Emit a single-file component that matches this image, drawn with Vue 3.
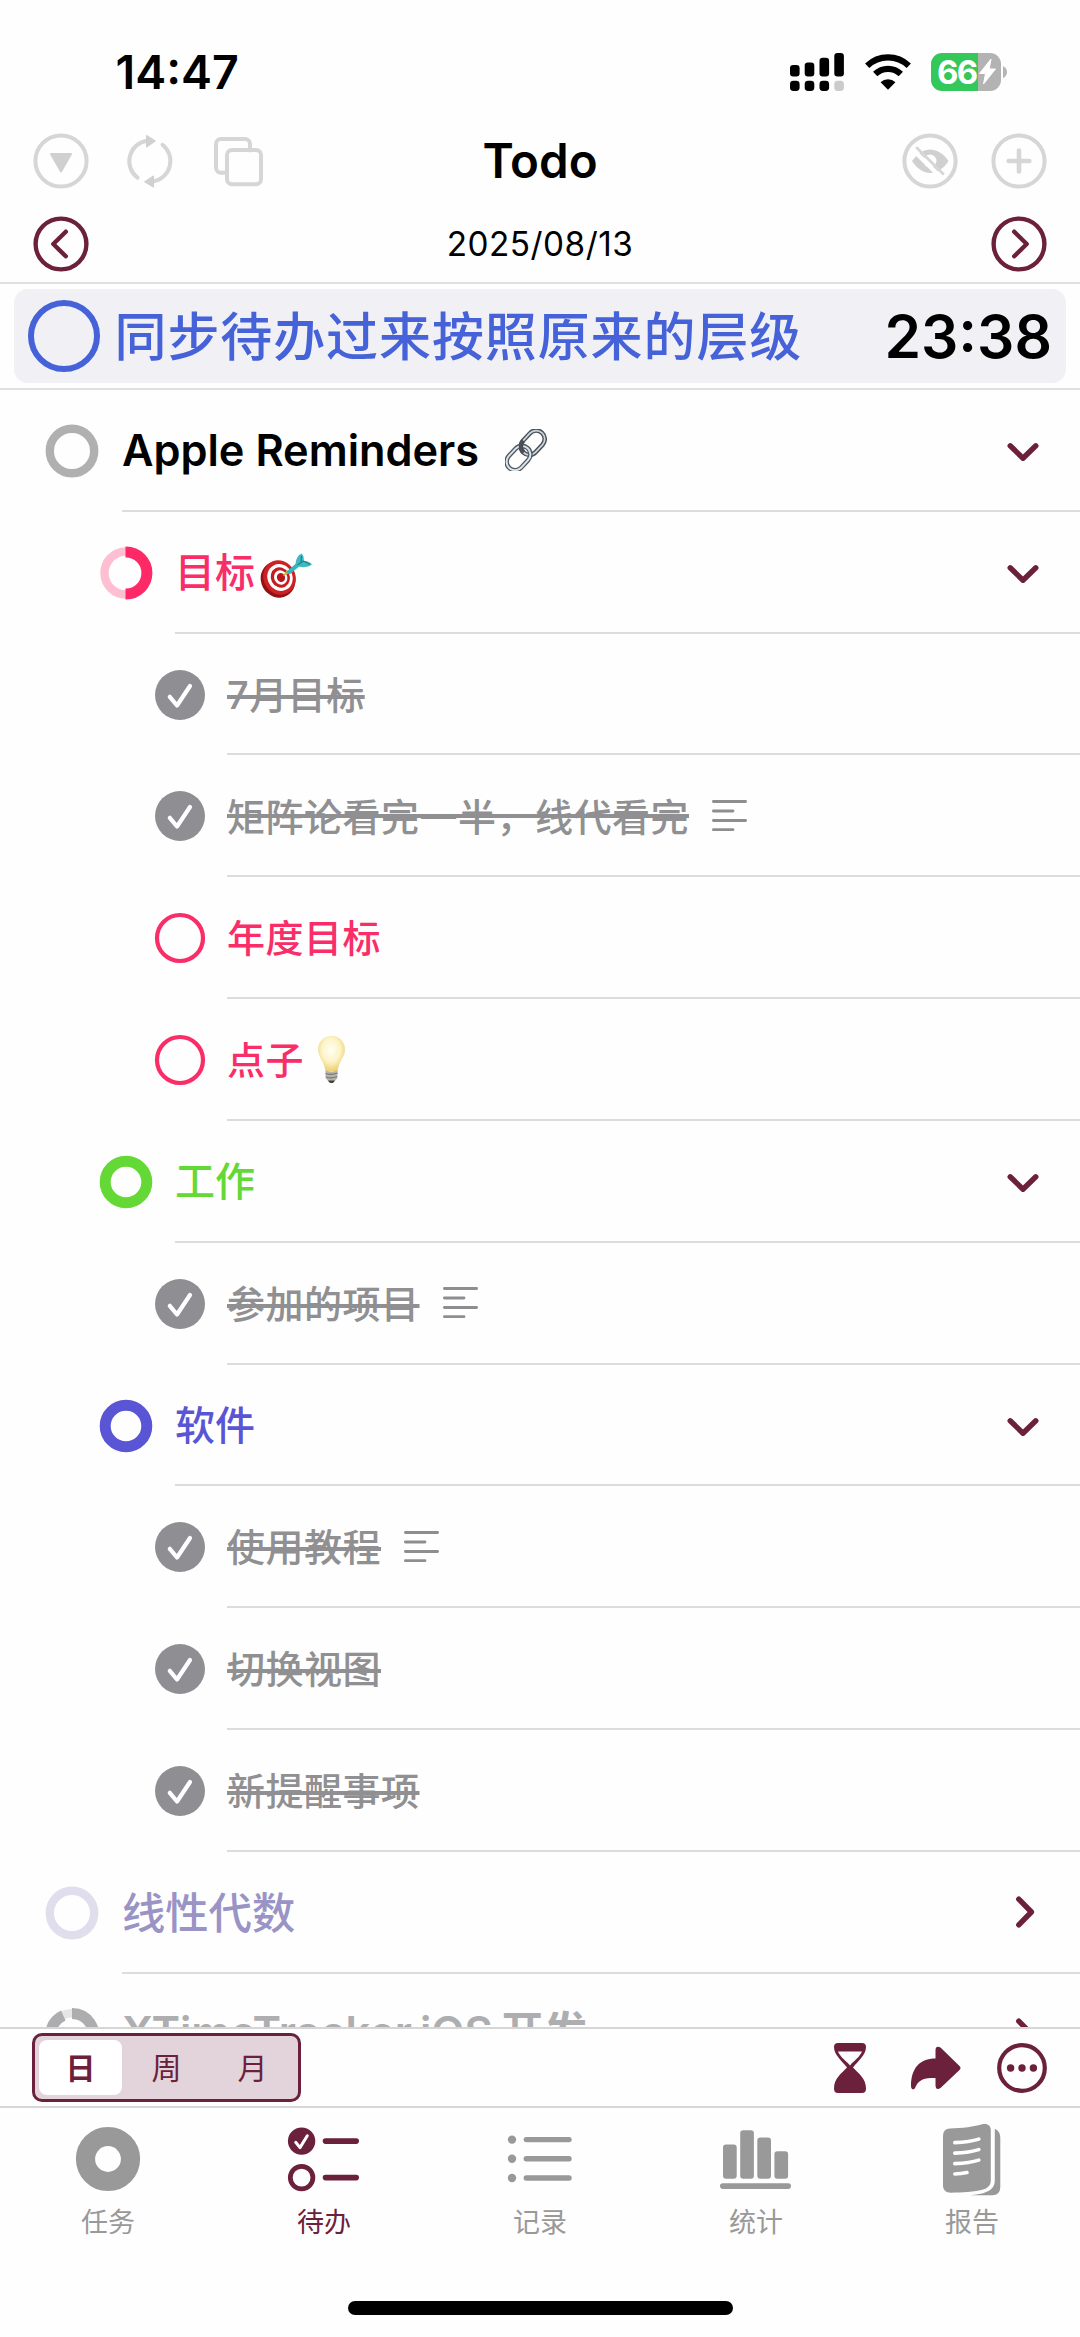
<script setup>
const rows = [
  { level: 0, mark: 'ring', color: '#b0b0b0', text: 'Apple Reminders', ink: '#000', emoji: 'link', arrow: 'down', latin: true },
  { level: 1, mark: 'half', color: '#fe2a68', text: '目标', ink: '#f92d68', emoji: 'target', arrow: 'down' },
  { level: 2, mark: 'done', text: '7月目标' },
  { level: 2, mark: 'done', text: '矩阵论看完一半，线代看完', note: true, hanOnly: true },
  { level: 2, mark: 'open', text: '年度目标', ink: '#f92d68' },
  { level: 2, mark: 'open', text: '点子', ink: '#f92d68', emoji: 'bulb' },
  { level: 1, mark: 'thick', color: '#64d935', text: '工作', ink: '#64d935', arrow: 'down' },
  { level: 2, mark: 'done', text: '参加的项目', note: true },
  { level: 1, mark: 'thick', color: '#5955d4', text: '软件', ink: '#5955d4', arrow: 'down' },
  { level: 2, mark: 'done', text: '使用教程', note: true },
  { level: 2, mark: 'done', text: '切换视图' },
  { level: 2, mark: 'done', text: '新提醒事项' },
  { level: 0, mark: 'ring', color: '#e0deec', text: '线性代数', ink: '#9994c5', arrow: 'right' },
  { level: 0, mark: 'most', color: '#adadb0', text: 'XTimeTracker iOS 开发', ink: '#aeaeb1', arrow: 'right', latin: true },
]
</script>

<template>
  <div class="screen" lang="zh-CN">
    <header class="status">
      <span class="clock">14:47</span>
      <div class="indicators">
        <svg width="54" height="38" viewBox="790 52.3 54 38">
          <rect x="790" y="64.3" width="9.6" height="11.4" rx="3.2" />
          <rect x="804.7" y="61.7" width="9.6" height="14" rx="3.2" />
          <rect x="819.5" y="57" width="9.6" height="18.7" rx="3.2" />
          <rect x="834.3" y="52.3" width="9.6" height="23.4" rx="3.2" />
          <rect x="790" y="80" width="9.6" height="10.3" rx="3.4" />
          <rect x="804.7" y="80" width="9.6" height="10.3" rx="3.4" />
          <rect x="819.5" y="80" width="9.6" height="10.3" rx="3.4" />
          <rect x="834.3" y="80" width="9.6" height="10.3" rx="3.4" fill="#cbcbcb" />
        </svg>
        <svg class="wifi" width="48" height="38" viewBox="0 0 48 38">
          <path d="M3.2 12.7A30 30 0 0 1 44.8 12.7M11.2 21A18.4 18.4 0 0 1 36.800 21" fill="none" stroke="#000" stroke-width="6.2" />
          <path d="M24 36.700 16.600 29.200A10.500 10.500 0 0 1 31.400 29.200Z" />
        </svg>
        <div class="battery">
          <span class="pct">66</span>
          <svg width="19" height="27" viewBox="0 0 19 27"><path d="M13 1 1.500 15.500h6L5.500 26 17.500 11h-6.300z" fill="#fff" stroke="#fff" stroke-linejoin="round" /></svg>
        </div>
        <svg width="4" height="12" viewBox="0 0 4 12"><path d="M0 0Q4 2 4 6T0 12Z" fill="#b5b5b5" /></svg>
      </div>
    </header>

    <nav class="nav">
      <div class="group">
        <svg width="56" height="56" viewBox="-28 -28 56 56" class="pale">
          <circle r="25.600" /><path class="solid" d="M-10-7h20L0 10.500z" stroke-width="2" />
        </svg>
        <svg width="56" height="56" viewBox="-28 -28 56 56" class="pale refresh">
          <path d="M-12.500 16.700A20.700 20.700 0 0 1-3-20.300M12.500-16.200A20.700 20.700 0 0 1 3 20.500" />
          <path class="solid" d="M-3.200-25.500 5.500-20 -3.200-14zM3.200 26-5.500 20.800 3.200 15z" stroke-width="1" />
        </svg>
        <svg width="56" height="56" viewBox="-28 -28 56 56" class="pale copy">
          <path d="M-11.700 11.700H-17a5 5 0 0 1-5-5V-17a5 5 0 0 1 5-5H7a5 5 0 0 1 5 5V-10.500" />
          <rect x="-11" y="-11" width="34" height="34.300" rx="5" />
        </svg>
      </div>
      <h1>Todo</h1>
      <div class="group">
        <svg width="56" height="56" viewBox="-28 -28 56 56" class="pale">
          <circle r="25.600" />
          <path class="fill" d="M-18 0C-12-8-6-11.500 0-11.500S13-8 18.500 0C13 8.500 6 12 0 12S-13 8-18 0Z" />
          <circle r="6.500" fill="#fff" stroke="none" />
          <path d="M-16.500-10.500 9.500 15" stroke="#fff" stroke-width="4.500" />
          <path d="M-13-13 13 12.700" stroke-width="2.800" />
        </svg>
        <svg width="56" height="56" viewBox="-28 -28 56 56" class="pale plus">
          <circle r="25.600" /><path d="M-10.300 0H10.300M0-10.500V10.500" stroke-width="4.600" />
        </svg>
      </div>
    </nav>

    <div class="dates">
      <svg width="56" height="56" viewBox="-28 -28 56 56" class="wine"><circle r="25.400" /><path d="M4.800-12.300-7.700 0 4.800 12.300" /></svg>
      <span class="date">2025/08/13</span>
      <svg width="56" height="56" viewBox="-28 -28 56 56" class="wine"><circle r="25.400" /><path d="M-4.800-12.300 7.700 0-4.800 12.300" /></svg>
    </div>

    <section class="current">
      <div class="card">
        <svg width="72" height="72" viewBox="-36 -36 72 72"><circle r="33" fill="none" stroke="#4562d8" stroke-width="6" /></svg>
        <span class="task">同步待办过来按照原来的层级</span>
        <span class="timer">23:38</span>
      </div>
    </section>

    <main class="list">
      <div v-for="(r, i) in rows" :key="i" class="row" :class="['level' + r.level, { done: r.mark === 'done', latin: r.latin, han: r.hanOnly }]">
        <svg class="mark" width="54" height="54" viewBox="-27 -27 54 54" fill="none">
          <circle v-if="r.mark === 'ring'" r="22.200" :stroke="r.color" stroke-width="8.400" />
          <circle v-else-if="r.mark === 'thick'" r="20.800" :stroke="r.color" stroke-width="11" />
          <template v-else-if="r.mark === 'half'">
            <path d="M0-21.500A21.500 21.500 0 0 0 0 21.500" stroke="#febfd2" stroke-width="8.400" />
            <path d="M-.5-20.900H0A20.900 20.900 0 0 1 0 20.900H-.5" :stroke="r.color" stroke-width="11" />
          </template>
          <template v-else-if="r.mark === 'most'">
            <circle r="21.800" stroke="#e6e6e6" stroke-width="8.400" />
            <path d="M0-21.500A21.500 21.500 0 1 1-8.700-19.600" :stroke="r.color" stroke-width="11" />
          </template>
          <circle v-else-if="r.mark === 'open'" r="23" stroke="#f92d68" stroke-width="4.200" />
          <template v-else>
            <circle r="25" fill="#8e8e93" />
            <path d="M-10.200 1.800-3 10.500 10-9" stroke="#fff" stroke-width="4.200" stroke-linecap="round" stroke-linejoin="round" />
          </template>
        </svg>
        <div class="body">
          <span class="label" :style="{ color: r.ink }">{{ r.text }}</span>
          <svg v-if="r.note" class="note" width="35" height="33" viewBox="0 0 35 33">
            <path d="M1.400 2.500H33.600M1.400 12H21M1.400 21.500H33.600M1.400 30.700H21" stroke="#8e8e90" stroke-width="2.800" stroke-linecap="round" />
          </svg>
          <svg v-if="r.emoji === 'link'" class="link" width="42" height="42" viewBox="0 0 42 42" fill="none">
            <g transform="rotate(-47 21 21)">
              <rect x="17.500" y="12.500" width="27" height="17" rx="8.500" stroke="#4b4f55" stroke-width="4.600" />
              <rect x="17.500" y="12.500" width="27" height="17" rx="8.500" stroke="#c9d5df" stroke-width="1.800" />
              <rect x="-3.500" y="12.500" width="27" height="17" rx="8.500" stroke="#54585e" stroke-width="4.600" />
              <rect x="-3.500" y="12.500" width="27" height="17" rx="8.500" stroke="#d6e4ef" stroke-width="2" />
              <path d="M17.500 21a8.500 8.500 0 0 1 8.500-8.500" stroke="#4b4f55" stroke-width="4.400" />
            </g>
          </svg>
          <svg v-if="r.emoji === 'target'" class="target" width="53" height="47" viewBox="0 0 53 47">
            <ellipse cx="18" cy="27.500" rx="17" ry="18.500" transform="rotate(-28 18 27.500)" fill="#8f1216" />
            <ellipse cx="19.500" cy="25.500" rx="16" ry="17.500" transform="rotate(-28 19.500 25.500)" fill="#cf2024" />
            <ellipse cx="20" cy="25.500" rx="12.400" ry="13.700" transform="rotate(-28 20 25.500)" fill="#fff" />
            <ellipse cx="20.300" cy="25.500" rx="9.400" ry="10.400" transform="rotate(-28 20.300 25.500)" fill="#c51c20" />
            <ellipse cx="20.700" cy="25.500" rx="6.600" ry="7.300" transform="rotate(-28 20.700 25.500)" fill="#fff" />
            <ellipse cx="21" cy="25.500" rx="4" ry="4.500" transform="rotate(-28 21 25.500)" fill="#b5171b" />
            <path d="M22.500 24 27 18 30 21Z" fill="#d9b42c" />
            <path d="M26 20 36 11.500 39 14.500 29.500 22.500Z" fill="#35b5bd" />
            <path d="M35.500 12Q36 4 41.500 1.500 44.500 4 43.500 9 49 8.500 52 12.500 47 16.500 38.500 14.500Z" fill="#3fb9c2" />
            <path d="M37.500 13 43.500 9 50 12.500M41 10.500 41.500 4" fill="none" stroke="#20848f" stroke-width="1.300" />
          </svg>
          <svg v-if="r.emoji === 'bulb'" class="bulb" width="29" height="49" viewBox="0 0 29 49">
            <defs><radialGradient id="glow" cx=".48" cy=".4" r=".6"><stop offset="0" stop-color="#fffef4" /><stop offset=".55" stop-color="#fdf4c8" /><stop offset="1" stop-color="#ecd074" /></radialGradient></defs>
            <path d="M14.500 1C22.500 1 28 7 28 14.500 28 22 22 26 20.500 36H8.500C7 26 1 22 1 14.500 1 7 6.500 1 14.500 1Z" fill="url(#glow)" />
            <path d="M8.500 35.500Q14.500 37.500 20.500 35.500V43L17 47Q14.500 48.500 12 47L8.500 43Z" fill="#b5b3aa" />
            <path d="M8.500 38.500Q14.500 40.500 20.500 38M9 42Q14.500 44 20 41.500" fill="none" stroke="#797870" stroke-width="1.200" />
            <path d="M11 45.500H18L16 48H13Z" fill="#44443f" />
          </svg>
          <svg v-if="r.arrow" class="arrow" :class="r.arrow" width="36" height="36" viewBox="-18 -18 36 36">
            <path :d="r.arrow === 'down' ? 'M-12.800-6.200 0 6.200 12.800-6.200' : 'M-6.200-12.800 6.400 0-6.200 12.800'" />
          </svg>
        </div>
      </div>
    </main>

    <section class="tools">
      <div class="segments">
        <span class="seg on">日</span><span class="seg">周</span><span class="seg">月</span>
      </div>
      <div class="actions">
        <svg width="32" height="50" viewBox="0 0 32 50" fill="#6b213c">
          <path fill-rule="evenodd" d="M4 0H28Q32 0 32 4C32 12 24 18 19 24.500 24 30 32 35 32 45.500Q32 50 28 50H4Q0 50 0 45.500C0 35 8 30 13 24.500 8 18 0 12 0 4Q0 0 4 0ZM4 8.500C6.500 14.500 12.500 18 16 22.500 19.500 18 25.500 14.500 28 8.500Z" />
        </svg>
        <svg width="50" height="44" viewBox="0 0 50 44" fill="#6b213c">
          <path d="M24.500 12.500V4.500Q24.500-1 29.500 1.500L48.500 20Q50.500 22 48.500 24L29.500 42Q25 45 24.500 39.500V32H20C11 32 6.500 36 4.500 41 3.500 44.500 0 44 0 40 0 22 9 12.500 24.500 12.500Z" />
        </svg>
        <svg width="50" height="50" viewBox="-25 -25 50 50">
          <circle r="22.800" fill="none" stroke="#6b213c" stroke-width="4.200" />
          <g fill="#6b213c"><circle cx="-11.400" r="3.700" /><circle r="3.700" /><circle cx="11.400" r="3.700" /></g>
        </svg>
      </div>
    </section>

    <footer class="tabs">
      <div class="tab">
        <svg width="80" height="76" viewBox="68 2120.700 80 76"><circle cx="108" cy="2158.700" r="22.500" fill="none" stroke="#999" stroke-width="19.200" /></svg>
        <span>任务</span>
      </div>
      <div class="tab active">
        <svg width="80" height="76" viewBox="284 2120.700 80 76" fill="none" stroke="#6b213c" stroke-width="5.600" stroke-linecap="round">
          <circle cx="301.600" cy="2140.800" r="13.700" fill="#6b213c" stroke="none" />
          <path d="M295.700 2142 300 2147.300 307.300 2135.500" stroke="#fff" stroke-width="3" stroke-linejoin="round" />
          <circle cx="301.600" cy="2177.300" r="11.300" stroke-width="4.800" />
          <path d="M325.500 2140.800H356.200M325.500 2177.300H356.200" />
        </svg>
        <span>待办</span>
      </div>
      <div class="tab">
        <svg width="80" height="76" viewBox="500 2120.700 80 76" fill="#999">
          <circle cx="512" cy="2139.300" r="4.200" /><circle cx="512" cy="2158.500" r="4.200" /><circle cx="512" cy="2177.700" r="4.200" />
          <path d="M526.300 2139.300H569M526.300 2158.500H569M526.300 2177.700H569" stroke="#999" stroke-width="5.400" stroke-linecap="round" />
        </svg>
        <span>记录</span>
      </div>
      <div class="tab">
        <svg width="80" height="76" viewBox="716 2120.700 80 76" fill="#999">
          <rect x="723" y="2144.200" width="13.700" height="34.200" rx="3" />
          <rect x="740.200" y="2130" width="13.700" height="48.400" rx="3" />
          <rect x="757.300" y="2137.300" width="13.700" height="41.100" rx="3" />
          <rect x="774.400" y="2151" width="13.700" height="27.400" rx="3" />
          <rect x="720" y="2183" width="71" height="5.600" rx="2.800" />
        </svg>
        <span>统计</span>
      </div>
      <div class="tab">
        <svg width="80" height="76" viewBox="932 2120.700 80 76" fill="#999">
          <path d="M950 2128.300C962 2128 974 2126.500 983 2123.800 988 2123 990.800 2125.500 990.800 2130V2180C990.800 2185 988 2187.500 984 2189 974 2191.700 962 2192.200 951 2192.400 946 2192.400 943 2190 943 2185V2136Q943 2128.500 950 2128.300Z" />
          <path d="M994.800 2128.500Q1000.300 2131 1000.300 2137V2187Q1000 2194.700 992.500 2195H970C982 2193.800 994.800 2192 994.800 2180Z" />
          <path d="M954.800 2142.300C963 2142 972 2141 978.800 2138.800M954.800 2152.800C963 2152.500 972 2151.500 978.800 2149.300M954.800 2163.300C963 2163 972 2162 978.800 2159.800M954.800 2173.700C959 2173.700 963 2173.200 967 2172.300" fill="none" stroke="#fff" stroke-width="3.600" stroke-linecap="round" />
        </svg>
        <span>报告</span>
      </div>
    </footer>
    <div class="home"></div>
  </div>
</template>

<style>
body {
  margin: 0;
  background: #fefefe;
}
</style>

<style scoped>
.screen {
  width: 1080px;
  height: 2337px;
  overflow: hidden;
  display: flex;
  flex-direction: column;
  box-sizing: border-box;
  background: #fefefe;
  color: #000;
  font-family: Inter, "Noto Sans CJK SC", sans-serif;
}
svg {
  display: block;
  flex: none;
}
.status {
  height: 110px;
  flex: none;
  box-sizing: border-box;
  padding: 52px 73px 0 115.5px;
  display: flex;
  justify-content: space-between;
  align-items: flex-start;
}
.clock {
  font-size: 46.5px;
  line-height: 40px;
  font-weight: 600;
}
.indicators {
  display: flex;
  align-items: center;
  height: 39px;
}
.wifi {
  margin: 0 19px 0 20px;
}
.battery {
  width: 70px;
  height: 38px;
  box-sizing: border-box;
  border-radius: 11px;
  background: linear-gradient(90deg, #34c759 0 47px, #b3b3b3 47px);
  display: flex;
  align-items: center;
  padding-left: 6px;
  margin-right: 2px;
}
.pct {
  width: 41px;
  color: #fff;
  font-weight: 700;
  font-size: 33px;
  letter-spacing: -1.700px;
}
.nav {
  height: 101px;
  flex: none;
  padding: 0 33px;
  display: flex;
  align-items: center;
  justify-content: space-between;
}
.group {
  width: 235px;
  display: flex;
}
.group:last-child {
  justify-content: flex-end;
}
.refresh {
  margin-left: 32.5px;
}
.copy {
  margin-left: 32px;
}
.plus {
  margin-left: 33px;
}
.pale {
  fill: none;
  stroke: #d6d6d6;
  stroke-width: 4;
  stroke-linecap: round;
  stroke-linejoin: round;
}
.pale .solid {
  fill: #d0d0d0;
  stroke: #d0d0d0;
}
.pale .fill {
  fill: #d0d0d0;
  stroke: none;
}
h1 {
  margin: 0;
  font-size: 47.5px;
  line-height: 60px;
  font-weight: 600;
}
.dates {
  height: 71px;
  flex: none;
  box-sizing: border-box;
  padding: 0 33px 6px;
  display: flex;
  align-items: center;
  justify-content: space-between;
}
.date {
  font-size: 33.3px;
  letter-spacing: 0.5px;
}
.wine {
  fill: none;
  stroke: #6b213c;
  stroke-width: 4.4;
  stroke-linecap: round;
  stroke-linejoin: round;
}
.current {
  height: 108px;
  flex: none;
  box-sizing: border-box;
  padding: 5px 14px;
  border-top: 2px solid #dfdfe1;
  border-bottom: 2px solid #dfdfe1;
}
.card {
  height: 94px;
  border-radius: 14px;
  background: #f1f0f5;
  display: flex;
  align-items: center;
  padding: 0 14px 0 13.5px;
}
.task {
  margin-left: 15px;
  padding-top: 4px;
  color: #4562d8;
  font-size: 52px;
  line-height: 70px;
  letter-spacing: 0.9px;
  font-weight: 500;
  white-space: nowrap;
}
.timer {
  margin-left: auto;
  padding-top: 2px;
  font-size: 58.7px;
  line-height: 70px;
  font-weight: 600;
}
.list {
  height: 1637px;
  flex: none;
  overflow: hidden;
}
.row {
  height: 121.83px;
  display: flex;
  align-items: stretch;
}
.mark {
  align-self: center;
}
.body {
  flex: 1;
  display: flex;
  align-items: center;
  border-bottom: 2px solid #dcdcdd;
  box-sizing: border-box;
}
.label {
  white-space: nowrap;
  line-height: 60px;
  padding-top: 2px;
  font-weight: 500;
}
.level0 {
  padding-left: 45px;
}
.level0 .body {
  margin-left: 23px;
}
.level0 .label {
  font-size: 43.3px;
}
.latin .label {
  font-weight: 600;
  padding-top: 0;
}
.latin:last-child .label {
  padding-bottom: 3px;
  word-spacing: -3px;
}
.level1 {
  padding-left: 99px;
}
.level1 .body {
  margin-left: 22px;
}
.level1 .label {
  font-size: 40px;
}
.level2 {
  padding-left: 153px;
}
.level2 .body {
  margin-left: 20px;
}
.level2 .label {
  font-size: 38px;
  letter-spacing: 0.5px;
}
.done .label {
  color: #909092;
  text-decoration: line-through;
  text-decoration-thickness: 3.5px;
}
.han .label {
  font-family: "Noto Sans CJK SC", sans-serif;
  padding-top: 0;
}
.note {
  margin-left: 23px;
}
.link {
  margin-left: 26px;
}
.target {
  margin: 7px 0 0 5px;
}
.bulb {
  margin-left: 13px;
}
.arrow {
  margin-left: auto;
  margin-right: 39.5px;
  fill: none;
  stroke: #6b213c;
  stroke-width: 5.4;
  stroke-linecap: round;
  stroke-linejoin: round;
}
.arrow.down {
  margin-top: 5px;
}
.arrow.right {
  margin-right: 37.5px;
}
.tools {
  height: 79px;
  flex: none;
  box-sizing: border-box;
  border-top: 2px solid #d6d6d7;
  padding: 0 33px 0 32px;
  display: flex;
  align-items: center;
  justify-content: space-between;
}
.segments {
  width: 269px;
  height: 69px;
  box-sizing: border-box;
  border: 3px solid #6b213c;
  border-radius: 10px;
  background: #e2d4da;
  padding: 4px;
  display: flex;
  gap: 3px;
}
.seg {
  flex: 1;
  display: flex;
  align-items: center;
  justify-content: center;
  border-radius: 8px;
  color: #6b213c;
  font-size: 30px;
  line-height: 40px;
}
.on {
  background: #fff;
  font-weight: 700;
}
.actions {
  display: flex;
  align-items: center;
}
.actions svg:nth-child(2) {
  margin: 0 36px 0 45px;
}
.tabs {
  height: 180px;
  flex: none;
  box-sizing: border-box;
  border-top: 2px solid #d6d6d7;
  padding-top: 13px;
  display: flex;
}
.tab {
  width: 216px;
  display: flex;
  flex-direction: column;
  align-items: center;
  color: #999;
  font-size: 27px;
  line-height: 40px;
}
.tab span {
  margin-top: 6px;
}
.active {
  color: #6b213c;
}
.home {
  width: 385px;
  height: 14px;
  border-radius: 7px;
  background: #000;
  margin: 15px auto 0;
}
</style>
